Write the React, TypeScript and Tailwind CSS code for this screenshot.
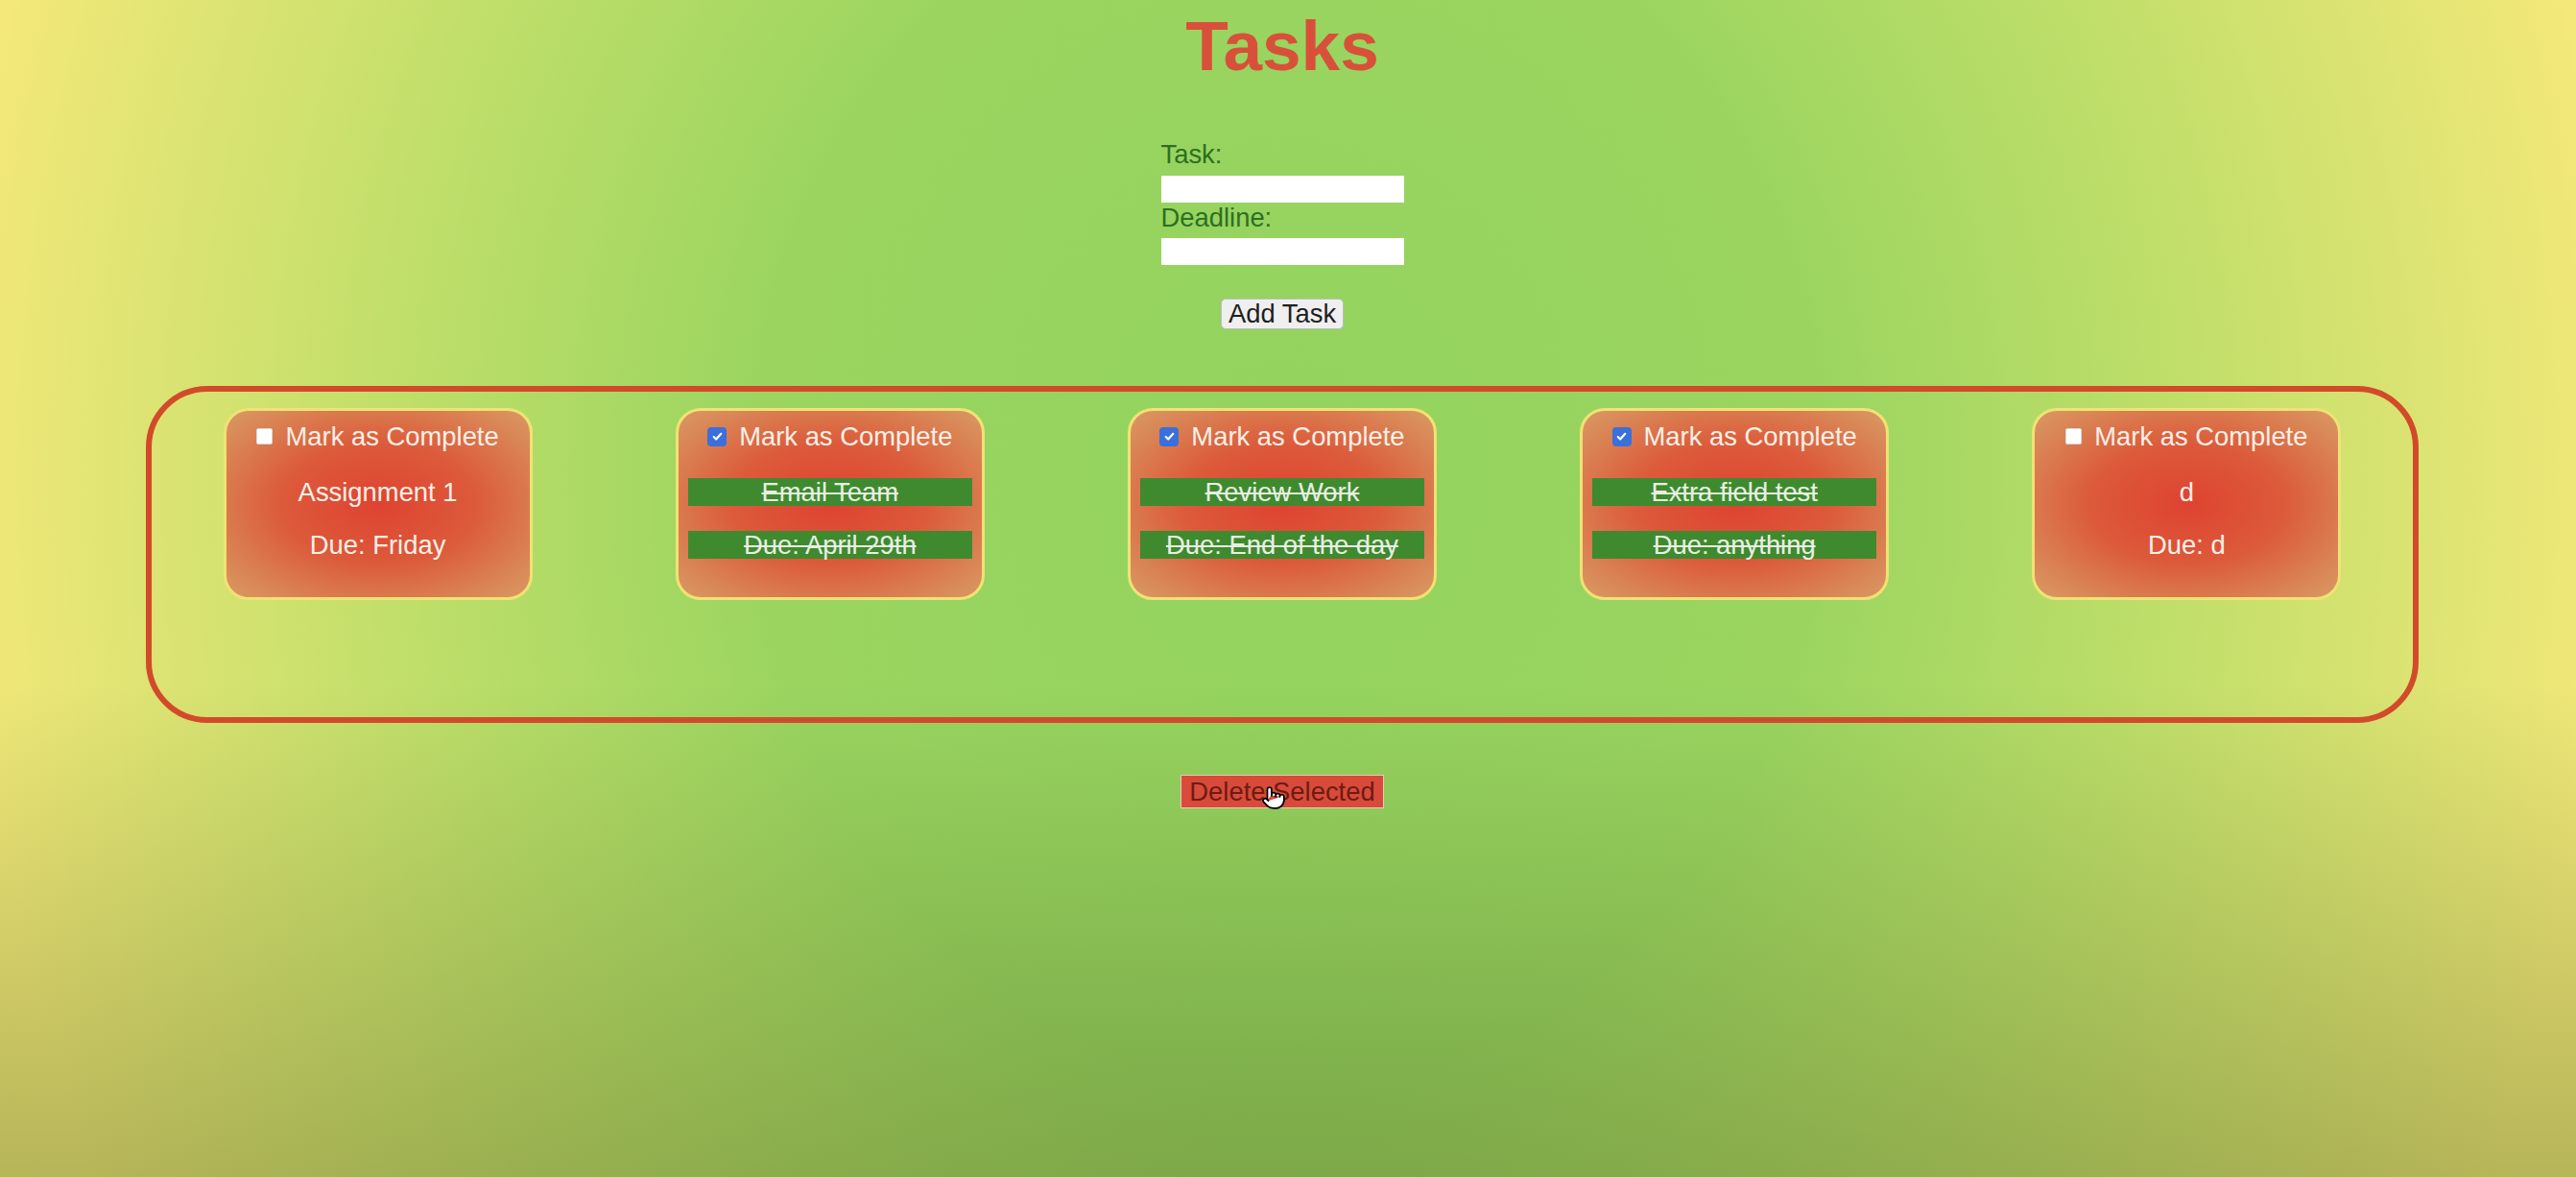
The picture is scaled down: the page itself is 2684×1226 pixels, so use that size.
import { Pointer } from 'lucide-react';

type Task = { id: number; title: string; due: string; done: boolean };

const tasks: Task[] = [
  { id: 1, title: 'Assignment 1', due: 'Friday', done: false },
  { id: 2, title: 'Email Team', due: 'April 29th', done: true },
  { id: 3, title: 'Review Work', due: 'End of the day', done: true },
  { id: 4, title: 'Extra field test', due: 'anything', done: true },
  { id: 5, title: 'd', due: 'd', done: false },
];

const Checkbox = ({ checked }: { checked: boolean }) =>
  checked ? (
    <span className="flex h-[20px] w-[20px] items-center justify-center rounded-[4px] bg-[#3b6fdc]">
      <svg viewBox="0 0 12 12" className="h-[13px] w-[13px]" fill="none" stroke="white" strokeWidth="2" strokeLinecap="round" strokeLinejoin="round">
        <path d="M2.5 6.5l2.3 2.3L9.5 3.5" />
      </svg>
    </span>
  ) : (
    <span className="block h-[17px] w-[17px] rounded-[2px] border border-[#d8d8d8] bg-white" />
  );

const TaskCard = ({ task }: { task: Task }) => {
  const row = task.done
    ? 'bg-[#3f8a2f] text-[#e8efe2] line-through decoration-[2px]'
    : 'text-[#fcefe7]';
  return (
    <div className="w-[322px] h-[200px] rounded-[26px] border-[3px] border-[#f1e274] bg-[radial-gradient(ellipse_at_center,#de4331_0%,#dc5a3a_45%,#d98a58_85%,#d99a64_100%)] px-[10px] pt-[12px] pb-[40px]">
      <div className="flex h-[29px] items-center justify-center gap-[13px] text-[#fcefe7]">
        <Checkbox checked={task.done} />
        <span>Mark as Complete</span>
      </div>
      <p className={`mt-[29px] h-[29px] text-center leading-[29px] ${row}`}>{task.title}</p>
      <p className={`mt-[26px] h-[29px] text-center leading-[29px] ${row}`}>Due: {task.due}</p>
    </div>
  );
};

export default function App() {
  return (
    <div className="relative min-h-[1226px] w-full overflow-hidden bg-[radial-gradient(ellipse_52%_130%_at_50%_40%,#92d35e_0%,#9bd560_40%,#b9dd68_62%,#f3e879_100%)] font-['Liberation_Sans',Arial,sans-serif] text-[27.4px]">
      <div className="pointer-events-none absolute inset-0 bg-[linear-gradient(to_bottom,rgba(0,0,0,0)_58%,rgba(40,62,12,0.3)_100%)]" />

      <div className="relative flex w-[2672px] flex-col items-center">
        <h1 className="mt-[11px] text-[73px] font-bold leading-none text-[#d9503a]">Tasks</h1>

        <div className="mt-[61px] flex w-[253px] flex-col">
          <label className="block h-[31px] leading-[31px] text-[#2f6e22]">Task:</label>
          <input className="mt-[7px] h-[28px] w-[253px] bg-white outline-none" />
          <label className="block h-[31px] leading-[31px] text-[#2f6e22]">Deadline:</label>
          <input className="mt-[6px] h-[28px] w-[253px] bg-white outline-none" />
          <button className="mx-auto mt-[35px] h-[32px] w-[128px] rounded-[5px] border border-[#bdbdbd] bg-[#efefef] leading-none text-[#1f1f1f]">
            Add Task
          </button>
        </div>

        <div className="mt-[59px] flex h-[351px] w-[2368px] items-start justify-around rounded-[64px] border-[6px] border-[#d24a2b] pt-[17px]">
          {tasks.map((t) => (
            <TaskCard key={t.id} task={t} />
          ))}
        </div>

        <div className="relative mt-[51px]">
          <button className="h-[35px] w-[212px] border border-[#f0c7b8] bg-[#d84b3a] leading-none text-[#6e1b12]">
            Delete Selected
          </button>
          <Pointer className="absolute left-[84px] top-[14px] h-[26px] w-[26px] fill-white text-black" strokeWidth={1.6} />
        </div>
      </div>
    </div>
  );
}
